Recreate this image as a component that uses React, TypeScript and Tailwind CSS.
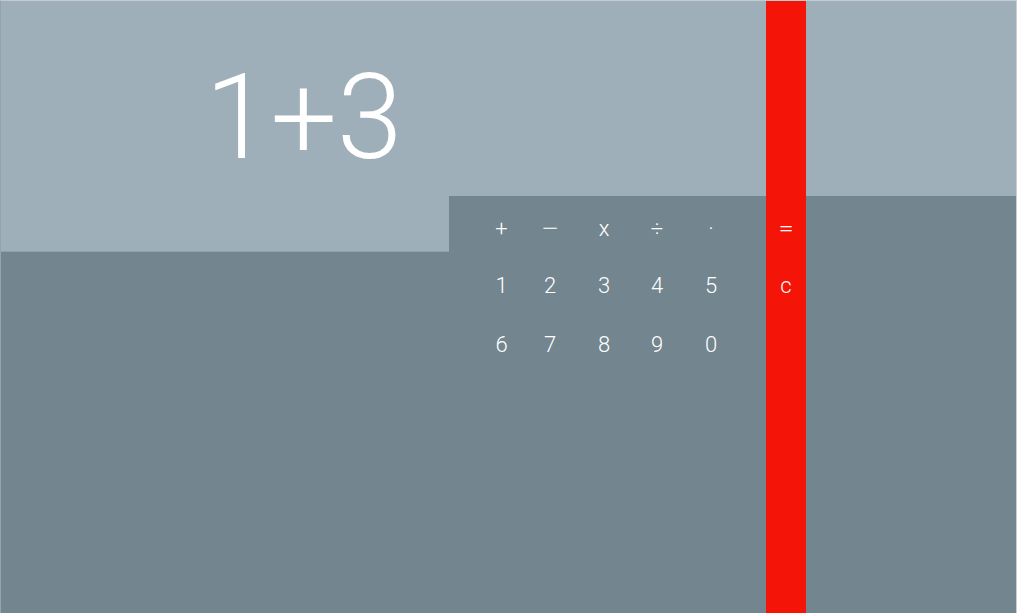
import React from "react";

const rows = [
  ["+", "−", "x", "÷", "·"],
  ["1", "2", "3", "4", "5"],
  ["6", "7", "8", "9", "0"],
];

export default function App() {
  return (
    <div
      className="flex h-[613px] w-[1017px] overflow-hidden border-t border-t-[#c4ccd1] border-l border-l-[#93a4ae] border-r border-r-[#c8d0d4] bg-[#73858e] text-white"
      style={{ fontFamily: "Roboto, 'Liberation Sans', sans-serif" }}
    >
      <div className="flex w-[765px] flex-col">
        <div className="h-[195px] bg-[#9fafb9] pl-[204px] pt-[58px]">
          <div className="text-[118px] font-light leading-none">1+3</div>
        </div>
        <div className="flex flex-1">
          <div className="flex w-[448px] flex-col">
            <div className="h-[56px] border-b border-b-[#8fa0a9] bg-[#9fafb9]" />
          </div>
          <div className="flex-1 pt-[4px] pl-[28px]">
            <div className="grid grid-cols-[49px_48px_60px_46px_62px] grid-rows-[57px_58px_59px]">
              {rows.flat().map((k, i) => (
                <div
                  key={i}
                  className={`flex items-center justify-center font-light leading-none ${
                    k === "−" ? "scale-x-150 text-[22px]" : "text-[22px]"
                  }`}
                >
                  {k}
                </div>
              ))}
            </div>
          </div>
        </div>
      </div>
      <div className="flex w-[40px] flex-col bg-[#f41408] pt-[199px]">
        <div className="flex h-[57px] items-center justify-center text-[22px] font-light leading-none">
          <span className="scale-x-125">=</span>
        </div>
        <div className="flex h-[57px] items-center justify-center text-[22px] font-light leading-none">
          c
        </div>
      </div>
      <div className="flex flex-1 flex-col">
        <div className="h-[195px] bg-[#9fafb9]" />
        <div className="flex-1 bg-[#73858e]" />
      </div>
    </div>
  );
}
